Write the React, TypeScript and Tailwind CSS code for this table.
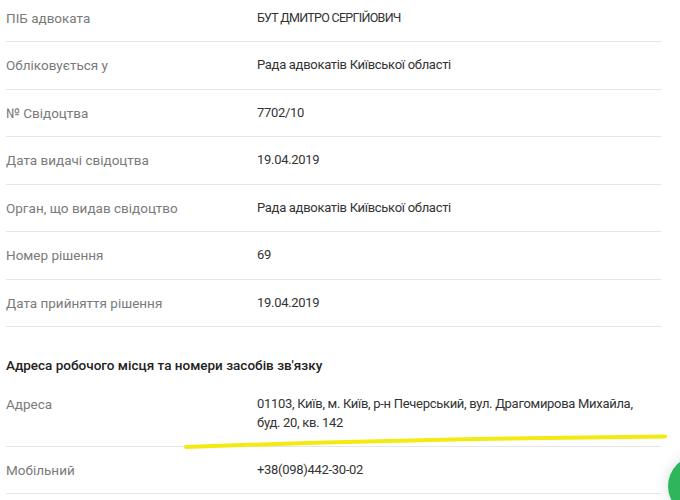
import React from "react";

const rows: [string, string, string?][] = [
  ["ПІБ адвоката", "БУТ ДМИТРО СЕРГІЙОВИЧ", "text-[12.5px] tracking-[-0.7px]"],
  ["Обліковується у", "Рада адвокатів Київської області"],
  ["№ Свідоцтва", "7702/10"],
  ["Дата видачі свідоцтва", "19.04.2019"],
  ["Орган, що видав свідоцтво", "Рада адвокатів Київської області"],
  ["Номер рішення", "69"],
  ["Дата прийняття рішення", "19.04.2019"],
];

function Row({
  label,
  valueClass = "text-[13px] tracking-[-0.3px]",
  children,
}: {
  label: string;
  valueClass?: string;
  children: React.ReactNode;
}) {
  return (
    <div className="grid grid-cols-[251px_1fr] border-b border-[#e6e6e6] py-[13.25px] leading-[20px]">
      <div className="text-[13.5px] text-[#7a7a7a]">{label}</div>
      <div className={`text-[#333333] ${valueClass}`}>{children}</div>
    </div>
  );
}

export default function App() {
  return (
    <div
      className="relative h-[500px] w-[680px] overflow-hidden bg-white"
      style={{ fontFamily: "Roboto, 'Liberation Sans', sans-serif" }}
    >
      <div className="-mt-[5.5px] ml-[6px] w-[655px]">
        {rows.map(([label, value, cls]) => (
          <Row key={label} label={label} valueClass={cls}>
            {value}
          </Row>
        ))}

        {/* Contacts */}
        <h3 className="pt-[28px] pb-[6px] text-[13.5px] font-medium leading-[20px] text-[#222222]">
          Адреса робочого місця та номери засобів зв'язку
        </h3>
        <Row label="Адреса">
          <span className="block leading-[19px]">
            01103, Київ, м. Київ, р-н Печерський, вул. Драгомирова Михайла,
            <br />
            буд. 20, кв. 142
          </span>
        </Row>
        <Row label="Мобільний">+38(098)442-30-02</Row>
      </div>

      {/* Marker highlight */}
      <svg className="pointer-events-none absolute left-0 top-0" width="680" height="500">
        <path
          d="M186 447 Q 400 439 665 436.5"
          stroke="#f3ea12"
          strokeWidth="4"
          strokeLinecap="round"
          fill="none"
        />
      </svg>

      {/* Chat button */}
      <div className="absolute left-[668px] top-[456px] h-[60px] w-[60px] rounded-full bg-[#2fb65a] shadow-[0_0_14px_rgba(0,0,0,0.15)]" />
    </div>
  );
}
